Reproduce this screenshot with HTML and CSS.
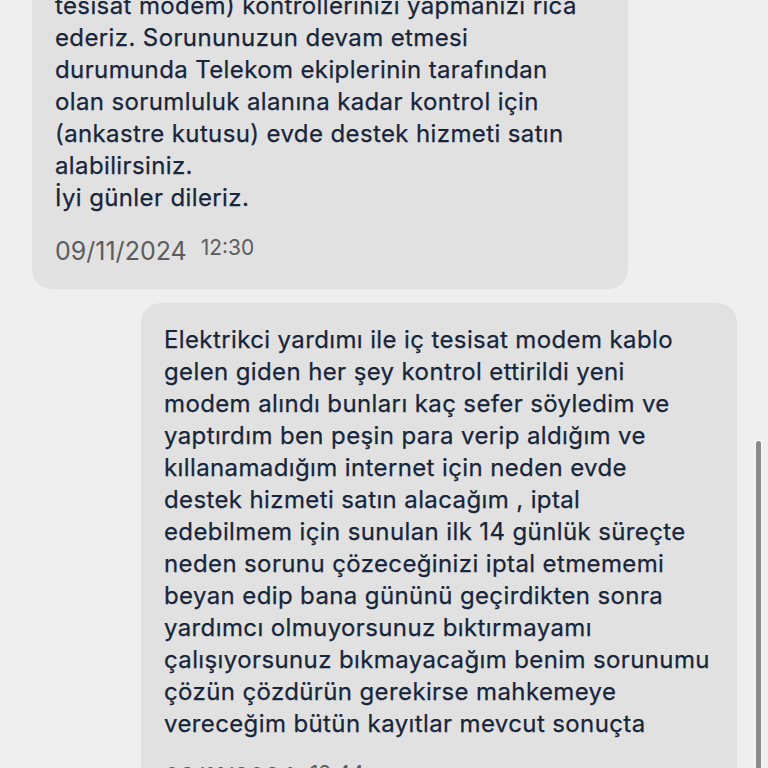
FILE: index.html
```html
<!DOCTYPE html>
<html lang="tr">
<head>
<meta charset="utf-8">
<link rel="stylesheet" href="styles.css">
</head>
<body>
<div class="screen">
  <div class="thread">
    <div class="bubble incoming">
      <p class="text">Bilgilendirme için iç tesisat (ankastre kutusu, iç<br>tesisat modem) kontrollerinizi yapmanızı rica<br>ederiz. Sorununuzun devam etmesi<br>durumunda Telekom ekiplerinin tarafından<br>olan sorumluluk alanına kadar kontrol için<br>(ankastre kutusu) evde destek hizmeti satın<br>alabilirsiniz.<br>İyi günler dileriz.</p>
      <div class="meta"><span class="date">09/11/2024</span><span class="time">12:30</span></div>
    </div>
    <div class="bubble outgoing">
      <p class="text">Elektrikci yardımı ile iç tesisat modem kablo<br>gelen giden her şey kontrol ettirildi yeni<br>modem alındı bunları kaç sefer söyledim ve<br>yaptırdım ben peşin para verip aldığım ve<br>kıllanamadığım internet için neden evde<br>destek hizmeti satın alacağım , iptal<br>edebilmem için sunulan ilk 14 günlük süreçte<br>neden sorunu çözeceğinizi iptal etmememi<br>beyan edip bana gününü geçirdikten sonra<br>yardımcı olmuyorsunuz bıktırmayamı<br>çalışıyorsunuz bıkmayacağım benim sorunumu<br>çözün çözdürün gerekirse mahkemeye<br>vereceğim bütün kayıtlar mevcut sonuçta</p>
      <div class="meta"><span class="date">09/11/2024</span><span class="time">12:44</span></div>
    </div>
  </div>
  <div class="scroll-thumb"></div>
</div>
</body>
</html>
```
FILE: styles.css
```css
* { box-sizing: border-box; }
html, body {
  margin: 0;
  padding: 0;
  height: 100%;
  overflow: hidden;
  background: #efefef;
}
.screen {
  position: relative;
  width: 768px;
  height: 768px;
  overflow: hidden;
  font-family: "Inter", "Liberation Sans", sans-serif;
}
.thread {
  display: flex;
  flex-direction: column;
  gap: 14px;
  margin-top: -63px;
}
.bubble {
  width: 596px;
  background: #e1e1e1;
  border-radius: 20px;
  padding: 21px 23px 25px 23px;
}
.incoming {
  margin-left: 32px;
  align-self: flex-start;
}
.outgoing {
  margin-right: 31px;
  align-self: flex-end;
}
.text {
  margin: 0;
  font-size: 24px;
  font-weight: 400;
  line-height: 32px;
  color: #17253b;
  white-space: nowrap;
  letter-spacing: 0.38px;
  -webkit-text-stroke: 0.25px #17253b;
}
.meta {
  display: flex;
  align-items: flex-start;
  gap: 14px;
  margin-top: 25px;
  color: #5c5c5e;
}
.date {
  font-size: 25px;
  line-height: 25px;
}
.time {
  font-size: 21px;
  line-height: 21px;
  margin-top: -2px;
}
.scroll-thumb {
  position: absolute;
  left: 756px;
  top: 441px;
  width: 5px;
  height: 340px;
  border-radius: 3px;
  background: #8a8a8a;
  box-shadow: 0 0 0 1px #f8f8f8;
}
```
